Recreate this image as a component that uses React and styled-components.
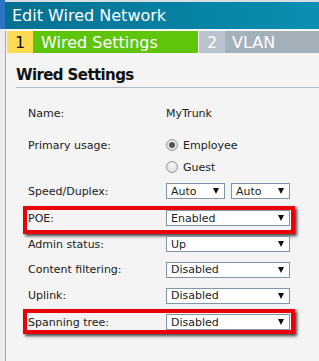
import React from "react";
import styled, { createGlobalStyle } from "styled-components";

const Global = createGlobalStyle`
  html, body { margin: 0; padding: 0; }
  body {
    background: #f4f4f4;
    font-family: "DejaVu Sans", Verdana, sans-serif;
    color: #202020;
    overflow: hidden;
  }
`;

const Page = styled.div`
  display: flex;
  width: 319px;
  height: 361px;
  overflow: hidden;
`;

const Rail = styled.div`
  width: 5px;
  flex: none;
  background: linear-gradient(to bottom, #2c74c6 0, #2c74c6 29px, #ececec 29px);
`;

const Main = styled.div`
  flex: 1;
  display: flex;
  flex-direction: column;
  min-width: 0;
`;

const TopStrip = styled.div`
  height: 2px;
  background: #d8dde2;
`;

const Header = styled.div`
  height: 27px;
  display: flex;
  align-items: center;
  padding-left: 7px;
  background: linear-gradient(to right, #03708f, #0a8fb2);
  color: #fff;
  font-size: 16px;
`;

const Divider = styled.div`
  height: 2px;
  background: #f6f6f6;
`;

const Body = styled.div`
  flex: 1;
  border-left: 1px solid #a7a7a7;
  padding-left: 1px;
`;

const StepBar = styled.div`
  display: flex;
  height: 22px;
`;

const StepNum = styled.div`
  width: 26px;
  flex: none;
  display: flex;
  align-items: center;
  justify-content: center;
  font-size: 16px;
  background: ${(p) => (p.$active ? "#ffda52" : "#b9c4ce")};
  color: ${(p) => (p.$active ? "#111" : "#fff")};
  border-left: ${(p) => (p.$active ? "none" : "1px solid #fff")};
`;

const StepLabel = styled.div`
  display: flex;
  align-items: center;
  font-size: 16px;
  color: #fff;
  background: ${(p) => (p.$active ? "#5ec50b" : "#a4b0ba")};
  width: ${(p) => (p.$active ? "165px" : "auto")};
  flex: ${(p) => (p.$active ? "none" : "1")};
  padding-left: ${(p) => (p.$active ? "8px" : "7px")};
  box-sizing: border-box;
`;

const Panel = styled.div`
  padding-left: 9px;
`;

const Heading = styled.div`
  padding-top: 10px;
  height: 24px;
  line-height: 24px;
  font-size: 15px;
  font-weight: bold;
  letter-spacing: -0.6px;
  color: #111;
  border-bottom: 1px solid #aeb8c6;
`;

const Form = styled.div`
  padding-left: 12px;
  padding-top: 12px;
`;

const Row = styled.div`
  position: relative;
  display: grid;
  grid-template-columns: 138px 1fr;
  align-items: center;
  height: ${(p) => p.$h}px;
  margin-top: ${(p) => p.$mt || 0}px;
  font-size: 11px;

  ${(p) =>
    p.$hl &&
    `
    &::after {
      content: "";
      position: absolute;
      left: -5px;
      right: 24px;
      top: ${p.$hl[0]}px;
      bottom: ${p.$hl[1]}px;
      border: 4px solid #ea0008;
      box-shadow: 2px 2px 3px rgba(0, 0, 0, 0.75);
      pointer-events: none;
    }
  `}
`;

const Label = styled.span`
  white-space: nowrap;
`;

const Value = styled.div`
  display: flex;
  align-items: center;
  gap: 6px;
`;

const SelectBox = styled.div`
  box-sizing: border-box;
  width: ${(p) => p.$w}px;
  height: 16px;
  background: #fff;
  border: 1px solid #8194a8;
  display: flex;
  align-items: center;
  justify-content: space-between;
  padding: 0 5px 0 4px;
  font-size: 11px;
  color: #1c1c1c;
`;

const Arrow = styled.span`
  width: 0;
  height: 0;
  border-left: 3.5px solid transparent;
  border-right: 3.5px solid transparent;
  border-top: 6px solid #111;
`;

const RadioWrap = styled.label`
  display: flex;
  align-items: center;
  gap: 5px;
  font-size: 11px;
`;

const RadioDot = styled.span`
  box-sizing: border-box;
  width: 12px;
  height: 12px;
  border-radius: 50%;
  border: 1px solid #9a9a9a;
  background: radial-gradient(circle at 50% 40%, #fafafa, #d4d4d4);
  display: flex;
  align-items: center;
  justify-content: center;

  &::after {
    content: "";
    width: 6px;
    height: 6px;
    border-radius: 50%;
    background: ${(p) => (p.$checked ? "#555" : "transparent")};
  }
`;

const Select = ({ value, w = 124 }) => (
  <SelectBox $w={w}>
    <span>{value}</span>
    <Arrow />
  </SelectBox>
);

const Radio = ({ label, checked }) => (
  <RadioWrap>
    <RadioDot $checked={checked} />
    <span>{label}</span>
  </RadioWrap>
);

export default function App() {
  return (
    <>
      <Global />
      <Page>
        <Rail />
        <Main>
          <TopStrip />
          <Header>Edit Wired Network</Header>
          <Divider />
          <Body>
            <StepBar>
              <StepNum $active>1</StepNum>
              <StepLabel $active>Wired Settings</StepLabel>
              <StepNum>2</StepNum>
              <StepLabel>VLAN</StepLabel>
            </StepBar>
            <Panel>
              <Heading>Wired Settings</Heading>
              <Form>
                <Row $h={26}>
                  <Label>Name:</Label>
                  <Value>MyTrunk</Value>
                </Row>
                <Row $h={24} $mt={7}>
                  <Label>Primary usage:</Label>
                  <Radio label="Employee" checked />
                </Row>
                <Row $h={20}>
                  <Label />
                  <Radio label="Guest" />
                </Row>
                <Row $h={28}>
                  <Label>Speed/Duplex:</Label>
                  <Value>
                    <Select value="Auto" w={59} />
                    <Select value="Auto" w={59} />
                  </Value>
                </Row>
                <Row $h={26} $hl={[1, -3]}>
                  <Label>POE:</Label>
                  <Select value="Enabled" />
                </Row>
                <Row $h={26}>
                  <Label>Admin status:</Label>
                  <Select value="Up" />
                </Row>
                <Row $h={25}>
                  <Label>Content filtering:</Label>
                  <Select value="Disabled" />
                </Row>
                <Row $h={27}>
                  <Label>Uplink:</Label>
                  <Select value="Disabled" />
                </Row>
                <Row $h={26} $hl={[0, 1]}>
                  <Label>Spanning tree:</Label>
                  <Select value="Disabled" />
                </Row>
              </Form>
            </Panel>
          </Body>
        </Main>
      </Page>
    </>
  );
}
